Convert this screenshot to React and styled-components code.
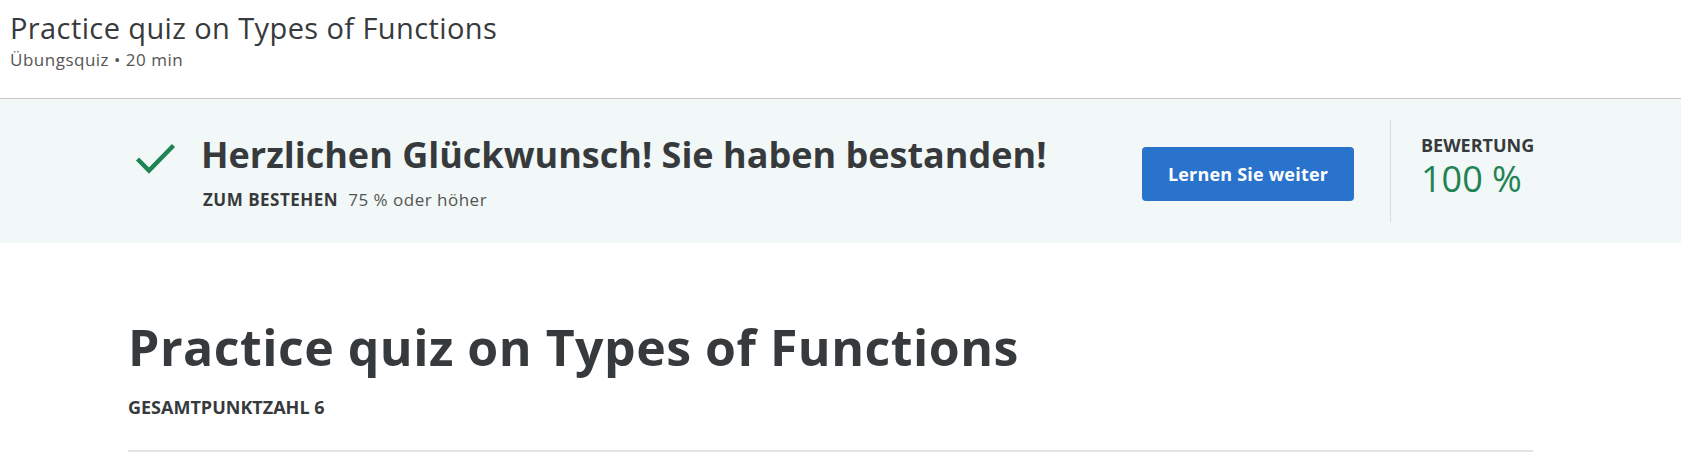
import React from "react";
import styled, { createGlobalStyle } from "styled-components";

const Global = createGlobalStyle`
  html, body { margin: 0; padding: 0; background: #ffffff; }
  body { font-family: "Open Sans", "Noto Sans", Arial, sans-serif; color: #373a3c; }
  * { box-sizing: border-box; }
`;

const Page = styled.div`
  width: 1681px;
  display: flex;
  flex-direction: column;
`;

const Header = styled.header`
  padding: 10px 10px 0 10px;
  height: 99px;
  border-bottom: 1px solid #c6c6c6;
`;

const HeaderTitle = styled.h1`
  margin: 0;
  font-size: 29px;
  font-weight: 400;
  letter-spacing: 0.4px;
  line-height: 36px;
  color: #373a3c;
`;

const HeaderMeta = styled.div`
  margin-top: 3px;
  font-size: 17px;
  letter-spacing: 0.5px;
  line-height: 22px;
  color: #545454;
`;

const Banner = styled.section`
  background: #f2f8f7;
  padding: 21px 0;
`;

const Container = styled.div`
  margin-left: 128px;
  width: 1405px;
`;

const BannerRow = styled.div`
  display: flex;
  align-items: stretch;
  height: 102px;
`;

const Result = styled.div`
  flex: 1;
  display: flex;
  align-items: flex-start;
  padding-left: 7px;
  padding-top: 13px;
`;

const CheckIcon = styled.svg`
  width: 41px;
  height: 31px;
  margin-top: 10px;
  margin-right: 25px;
  flex-shrink: 0;
`;

const ResultText = styled.div`
  display: flex;
  flex-direction: column;
`;

const Headline = styled.h2`
  margin: 0;
  font-size: 36px;
  font-weight: 700;
  line-height: 44px;
  color: #373a3c;
`;

const PassLine = styled.div`
  margin-top: 12px;
  font-size: 17px;
  letter-spacing: 0.5px;
  line-height: 22px;
  display: flex;
  gap: 10px;
  padding-left: 2px;
`;

const PassLabel = styled.span`
  font-weight: 700;
  text-transform: uppercase;
`;

const PassValue = styled.span`
  color: #545454;
`;

const Actions = styled.div`
  display: flex;
  align-items: center;
  padding-top: 6px;
`;

const PrimaryButton = styled.button`
  width: 212px;
  height: 54px;
  border: none;
  border-radius: 4px;
  background: #2a73cc;
  color: #ffffff;
  font-family: inherit;
  font-size: 18px;
  letter-spacing: 0.2px;
  font-weight: 700;
  cursor: pointer;
`;

const VDivider = styled.div`
  width: 1px;
  background: #dcdcdc;
  margin: 0 30px 0 36px;
`;

const Score = styled.div`
  width: 112px;
  display: flex;
  flex-direction: column;
  padding-top: 13px;
`;

const ScoreLabel = styled.div`
  font-size: 18px;
  font-weight: 700;
  line-height: 24px;
  text-transform: uppercase;
  color: #373a3c;
`;

const ScoreValue = styled.div`
  font-size: 36px;
  line-height: 40px;
  margin-top: 2px;
  color: #1f8354;
`;

const Main = styled.main`
  padding-top: 72px;
`;

const QuizTitle = styled.h1`
  margin: 0;
  font-size: 50px;
  font-weight: 700;
  letter-spacing: 0.5px;
  line-height: 64px;
  color: #373a3c;
`;

const TotalPoints = styled.div`
  margin-top: 16px;
  font-size: 18px;
  font-weight: 700;
  line-height: 24px;
  text-transform: uppercase;
  color: #373a3c;
`;

const Rule = styled.hr`
  margin: 31px 0 0 0;
  border: none;
  border-top: 2px solid #e2e2e2;
`;

export default function App() {
  return (
    <Page>
      <Global />
      <Header>
        <HeaderTitle>Practice quiz on Types of Functions</HeaderTitle>
        <HeaderMeta>Übungsquiz • 20 min</HeaderMeta>
      </Header>
      <Banner>
        <Container>
          <BannerRow>
            <Result>
              <CheckIcon viewBox="0 0 41 31" aria-hidden="true">
                <path d="M2.5 16 L14 27.5 L38.5 2.5" fill="none" stroke="#1f8354" strokeWidth="4.4" strokeLinecap="butt" strokeLinejoin="miter" />
              </CheckIcon>
              <ResultText>
                <Headline>Herzlichen Glückwunsch! Sie haben bestanden!</Headline>
                <PassLine>
                  <PassLabel>Zum Bestehen</PassLabel>
                  <PassValue>75 % oder höher</PassValue>
                </PassLine>
              </ResultText>
            </Result>
            <Actions>
              <PrimaryButton>Lernen Sie weiter</PrimaryButton>
            </Actions>
            <VDivider />
            <Score>
              <ScoreLabel>Bewertung</ScoreLabel>
              <ScoreValue>100 %</ScoreValue>
            </Score>
          </BannerRow>
        </Container>
      </Banner>
      <Main>
        <Container>
          <QuizTitle>Practice quiz on Types of Functions</QuizTitle>
          <TotalPoints>Gesamtpunktzahl 6</TotalPoints>
          <Rule />
        </Container>
      </Main>
    </Page>
  );
}
